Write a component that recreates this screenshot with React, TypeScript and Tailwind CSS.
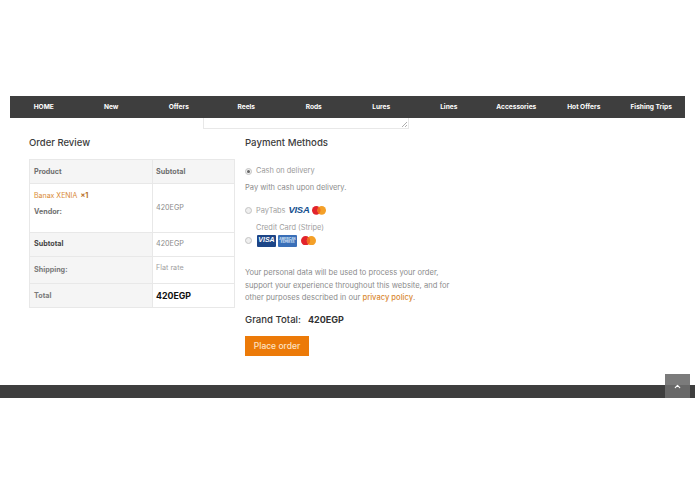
import { ChevronUp } from "lucide-react";

const navItems = ["HOME", "New", "Offers", "Reels", "Rods", "Lures", "Lines", "Accessories", "Hot Offers", "Fishing Trips"];

function VisaWord() {
  return <span className="text-[9.5px] leading-none font-extrabold tracking-[-0.3px] text-[#15508f] italic [font-family:'Liberation_Sans',sans-serif]">VISA</span>;
}

function MasterCircles({ size }: { size: number }) {
  return (
    <svg width={size} height={size * 0.62} viewBox="0 0 26 16">
      <circle cx="8" cy="8" r="8" fill="#e2232c" />
      <circle cx="18" cy="8" r="8" fill="#f4a028" />
      <path d="M13 1.8a8 8 0 0 1 0 12.4a8 8 0 0 1 0-12.4z" fill="#f26a21" />
    </svg>
  );
}

function Radio({ checked }: { checked?: boolean }) {
  return (
    <span className="flex h-[7px] w-[7px] shrink-0 items-center justify-center rounded-full border border-[#c4c4c4] bg-[#efefef]">
      {checked && <span className="h-[3px] w-[3px] rounded-full bg-[#666]" />}
    </span>
  );
}

export default function App() {
  return (
    <div className="relative h-[494px] overflow-hidden bg-white text-[#8a8a8a] [font-family:Inter,'Noto_Sans',sans-serif]">
      <div className="h-24" />
      <nav className="mx-2.5 grid h-[22px] grid-cols-10 items-center bg-[#3e3e3e] pt-[1px] text-center text-[6.6px] font-bold text-white">
        {navItems.map((item) => (
          <a key={item} className="truncate">{item}</a>
        ))}
      </nav>

      <div className="relative ml-[203px] h-[11px] w-[206px] border-x border-b border-[#e8e8e8]">
        <svg className="absolute right-0 bottom-0" width="7" height="7" viewBox="0 0 7 7">
          <path d="M1 6L6 1M4 6L6 4" stroke="#999" strokeWidth="0.8" />
        </svg>
      </div>

      <div className="mt-[7px] flex items-start pl-[29px]">
        <div className="w-[206px]">
          <h3 className="text-[9.5px] leading-[13px] font-medium text-[#3c3c3c]">Order Review</h3>
          <table className="mt-[10px] w-[206px] table-fixed border-collapse border border-[#e4e4e4] text-[7.2px]">
            <tbody>
              <tr className="h-6 bg-[#f5f5f5] font-bold text-[#6f6f6f]">
                <td className="w-[123px] border border-[#e8e8e8] pt-[2px] pl-[4px]">Product</td>
                <td className="border border-[#e8e8e8] pt-[2px] pl-[3px]">Subtotal</td>
              </tr>
              <tr className="h-[49px]">
                <td className="border border-[#e8e8e8] pl-[4px] align-top">
                  <div className="mt-[7px] text-[#d98a35]">
                    <span className="text-[7px]">Banax XENIA</span> <b className="ml-[1px] text-[#b8702a]">×1</b>
                  </div>
                  <div className="mt-[5px] font-bold text-[#6f6f6f]">Vendor:</div>
                </td>
                <td className="border border-[#e8e8e8] pl-[3px]">420EGP</td>
              </tr>
              <tr className="h-6">
                <td className="border border-[#e8e8e8] bg-[#f5f5f5] pl-[4px] font-bold text-[#444]">Subtotal</td>
                <td className="border border-[#e8e8e8] pl-[3px]">420EGP</td>
              </tr>
              <tr className="h-[27px]">
                <td className="border border-[#e8e8e8] bg-[#f5f5f5] pl-[4px] font-bold text-[#7a7a7a]">Shipping:</td>
                <td className="border border-[#e8e8e8] pl-[3px] align-top"><div className="mt-[6px] text-[#a0a0a0]">Flat rate</div></td>
              </tr>
              <tr className="h-6">
                <td className="border border-[#e8e8e8] bg-[#f5f5f5] pt-[2px] pl-[4px] font-bold text-[#7a7a7a]">Total</td>
                <td className="border border-[#e8e8e8] pl-[3px] text-[8.8px] font-bold text-[#111]">420EGP</td>
              </tr>
            </tbody>
          </table>
        </div>

        <div className="ml-[10px] w-[210px] text-[7.4px]">
          <h3 className="text-[9.6px] leading-[13px] font-medium text-[#3c3c3c]">Payment Methods</h3>
          <div className="mt-[17px] flex items-center gap-[4px] leading-[10px] text-[#9a9a9a]">
            <Radio checked /> <span>Cash on delivery</span>
          </div>
          <p className="mt-[7px] text-[7.5px] leading-[10px] text-[#8c8c8c]">Pay with cash upon delivery.</p>
          <div className="mt-3 flex h-[11px] items-center gap-[4px] text-[#a0a0a0]">
            <Radio /> <span>PayTabs</span>
            <span className="ml-[-1px]"><VisaWord /></span>
            <span className="ml-[-1px]"><MasterCircles size={14} /></span>
          </div>
          <div className="mt-[7px] pl-[11px] leading-[10px] text-[#a0a0a0]">Credit Card (Stripe)</div>
          <div className="mt-[1px] flex h-[13px] items-center">
            <Radio />
            <span className="ml-[5px] flex h-[12px] w-[19px] items-center justify-center rounded-[1px] bg-[#1c4587] text-[7px] font-extrabold text-white italic [font-family:'Liberation_Sans',sans-serif]">VISA</span>
            <span className="ml-[2px] flex h-[12px] w-[19px] flex-col items-center justify-center rounded-[1px] bg-[#3a6fb8] text-[3px] leading-[3px] font-bold text-[#d7e6f7]">
              <span>AMERICAN</span>
              <span>EXPRESS</span>
            </span>
            <span className="ml-[4px]"><MasterCircles size={15} /></span>
          </div>
          <p className="mt-5 text-[7.6px] leading-[12.5px] text-[#8c8c8c]">
            Your personal data will be used to process your order,
            <br />
            support your experience throughout this website, and for
            <br />
            other purposes described in our <span className="font-medium text-[#d98a35]">privacy policy</span>.
          </p>
          <div className="mt-2 flex text-[9.6px] leading-[13px] font-medium text-[#333]">
            <span>Grand Total:</span>
            <span className="ml-[7px] text-[9px] font-bold">420EGP</span>
          </div>
          <button className="mt-[10px] h-5 w-16 bg-[#ec7a08] pt-[1px] text-[8.5px] font-medium text-[#fde3c4]">Place order</button>
        </div>
      </div>

      <footer className="absolute top-[385px] right-0 left-0 h-[13px] bg-[#3e3e3e]" />
      <a className="absolute top-[374px] left-[665px] flex h-6 w-[25px] items-end justify-center bg-[#6d6d6d]/90 pb-[7px] text-white">
        <ChevronUp size={9} strokeWidth={3} />
      </a>
    </div>
  );
}
